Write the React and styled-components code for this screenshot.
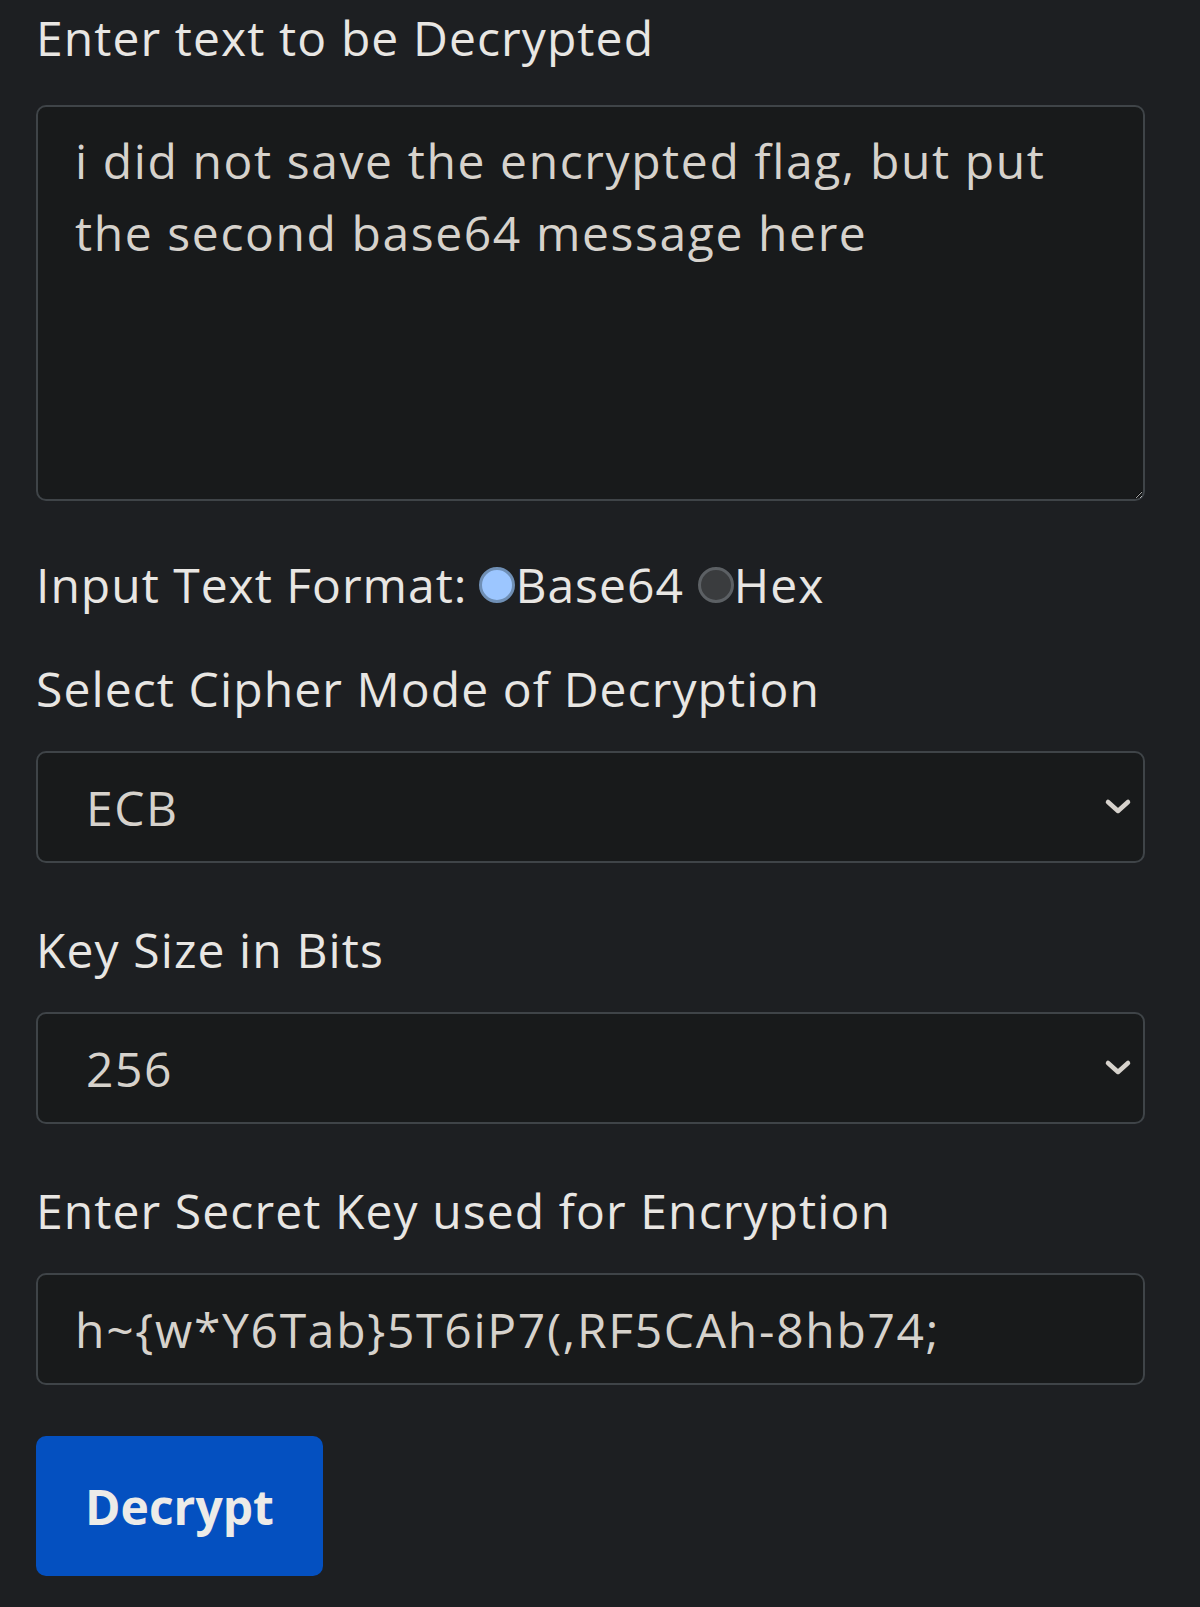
import React from 'react'
import styled, { createGlobalStyle } from 'styled-components'

const GlobalStyle = createGlobalStyle`
html, body {
  margin: 0;
  padding: 0;
  background: #1d1f22;
}
body {
  font-family: "Open Sans", "Noto Sans", sans-serif;
  color: #e8e6e3;
}
`

const Page = styled.form`
padding: 2px 55px 30px 36px;
display: flex;
flex-direction: column;
`

const Label = styled.label`
display: block;
font-size: 48px;
line-height: 72px;
letter-spacing: 1.1px;
color: #e8e6e3;
margin-bottom: ${props => props.gap || 26}px;
`

const TextArea = styled.textarea`
box-sizing: border-box;
width: 100%;
height: 396px;
margin: 0 0 48px 0;
padding: 18px 37px;
font-family: inherit;
font-size: 48px;
line-height: 72px;
letter-spacing: 1.6px;
color: #d6d2cc;
background: #181a1b;
border: 2px solid #3f4448;
border-radius: 10px;
resize: vertical;
outline: none;
color-scheme: dark;
`

const RadioRow = styled.div`
display: flex;
align-items: center;
font-size: 48px;
line-height: 72px;
letter-spacing: 1px;
margin-bottom: 32px;
`

const Radio = styled.input`
appearance: none;
margin: 0 0 0 ${props => props.first ? 12 : 14}px;
width: 36px;
height: 36px;
border-radius: 50%;
border: 3px solid ${props => props.checked ? '#6f8fb5' : '#5c6064'};
background: ${props => props.checked ? '#9cc6ff' : '#3a3c3e'};
box-sizing: border-box;
`

const SelectWrap = styled.div`
position: relative;
margin-bottom: 51px;
`

const Select = styled.select`
box-sizing: border-box;
width: 100%;
height: 112px;
appearance: none;
padding: 0 80px 0 48px;
font-family: inherit;
font-size: 48px;
letter-spacing: 1.6px;
color: #d6d2cc;
background: #181a1b;
border: 2px solid #3f4448;
border-radius: 10px;
outline: none;
`

const Chevron = styled.svg`
position: absolute;
right: 13px;
top: 47px;
pointer-events: none;
`

const Input = styled.input`
box-sizing: border-box;
width: 100%;
height: 112px;
margin-bottom: 51px;
padding: 0 37px;
font-family: inherit;
font-size: 48px;
letter-spacing: 1.7px;
color: #d6d2cc;
background: #181a1b;
border: 2px solid #3f4448;
border-radius: 10px;
outline: none;
`

const Button = styled.button`
align-self: flex-start;
width: 287px;
height: 140px;
font-family: inherit;
font-size: 48px;
font-weight: 700;
color: #ecebe8;
background: #0450c0;
border: none;
border-radius: 10px;
`

const Picker = ({ value, options }) => (
  <SelectWrap>
    <Select defaultValue={value}>
      {options.map(o => <option key={o}>{o}</option>)}
    </Select>
    <Chevron width="28" height="18" viewBox="0 0 28 18">
      <path d="M4 4 L14 13 L24 4" fill="none" stroke="#d6d2cc" strokeWidth="4.5" strokeLinecap="round" strokeLinejoin="round" />
    </Chevron>
  </SelectWrap>
)

const App = () => {
  const [format, setFormat] = React.useState('base64')
  return (
    <>
      <GlobalStyle />
      <Page onSubmit={e => e.preventDefault()}>
        <Label gap={31}>Enter text to be Decrypted</Label>
        <TextArea defaultValue="i did not save the encrypted flag, but put the second base64 message here" />
        <RadioRow>
          Input Text Format:
          <Radio type="radio" first name="fmt" checked={format === 'base64'} onChange={() => setFormat('base64')} />
          Base64
          <Radio type="radio" name="fmt" checked={format === 'hex'} onChange={() => setFormat('hex')} />
          Hex
        </RadioRow>
        <Label>Select Cipher Mode of Decryption</Label>
        <Picker value="ECB" options={['ECB', 'CBC']} />
        <Label>Key Size in Bits</Label>
        <Picker value="256" options={['128', '192', '256']} />
        <Label>Enter Secret Key used for Encryption</Label>
        <Input defaultValue="h~{w*Y6Tab}5T6iP7(,RF5CAh-8hb74;" />
        <Button type="submit">Decrypt</Button>
      </Page>
    </>
  )
}

export default App
